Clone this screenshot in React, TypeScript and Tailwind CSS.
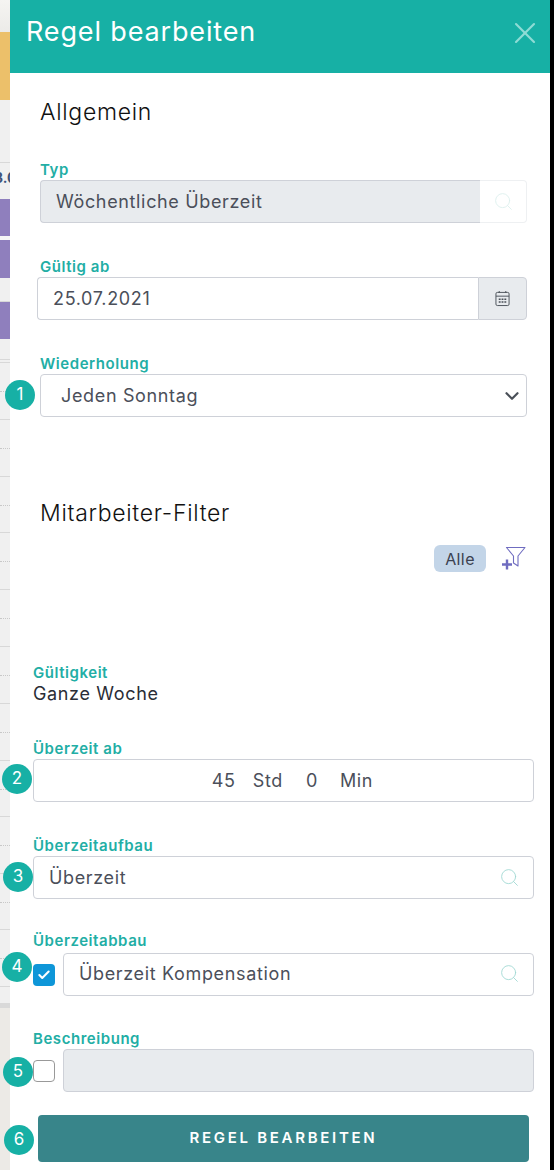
import React from "react";
import { Check, ChevronDown, Search, X } from "lucide-react";

const strip = [
  { cls: "h-[32px] bg-gradient-to-b from-[#f5f4f2] to-[#ecebe8]" },
  { cls: "h-[68px] bg-[#ecc06a]" },
  { cls: "h-[63px] bg-[#f0f0f0] border-b border-[#d8d8d8]" },
  { cls: "h-[36px] bg-[#f0f0f0]", text: "3.0" },
  { cls: "h-[37px] bg-[#8f7fbd]" },
  { cls: "h-[4px] bg-[#f6f6f6]" },
  { cls: "h-[38px] bg-[#8f7fbd]" },
  { cls: "h-[24px] bg-[#f0f0f0] border-b border-[#d8d8d8]" },
  { cls: "h-[37px] bg-[#8f7fbd]" },
  { cls: "h-[21px] bg-[#f0f0f0] border-b border-[#d8d8d8]" },
  { cls: "h-[3px] bg-[#f0f0f0] border-b border-[#d8d8d8]" },
];

const rows = [
  "h-[57px]",
  "h-[57px]",
  "h-[56px]",
  "h-[57px]",
  "h-[57px]",
  "h-[57px]",
  "h-[57px]",
  "h-[56px]",
  "h-[57px]",
  "h-[56px]",
  "h-[57px]",
];

const badges = [
  { n: 1, cls: "left-[5px] top-[380px]" },
  { n: 2, cls: "left-[2px] top-[764px]" },
  { n: 3, cls: "left-[3px] top-[862px]" },
  { n: 4, cls: "left-[2px] top-[952px]" },
  { n: 5, cls: "left-[3px] top-[1057px]" },
  { n: 6, cls: "left-[4px] top-[1125px]" },
];

function Label({ children, className = "" }: { children: React.ReactNode; className?: string }) {
  return (
    <div className={`h-[21px] text-[15px] leading-[21px] font-semibold tracking-[0.55px] text-[#22aea5] ${className}`}>
      {children}
    </div>
  );
}

function SearchIcon({ faint = false }: { faint?: boolean }) {
  return <Search strokeWidth={1} className={`h-[21px] w-[21px] ${faint ? "text-[#dcefed]" : "text-[#9fd8d2]"}`} />;
}

function CalendarIcon() {
  return (
    <svg viewBox="0 0 16 18" className="h-[17px] w-[15px] text-[#4a5058]" fill="none" stroke="currentColor">
      <rect x="1" y="2.5" width="14" height="14" rx="1.5" />
      <path d="M1 6.5h14M4.5 1v2M11.5 1v2" />
      <path
        d="M4 9h2v1.5H4zM7 9h2v1.5H7zM10 9h2v1.5h-2zM4 12h2v1.5H4zM7 12h2v1.5H7zM10 12h2v1.5h-2z"
        fill="currentColor"
        stroke="none"
      />
    </svg>
  );
}

function FilterPlusIcon() {
  return (
    <svg viewBox="0 0 25 25" className="h-[25px] w-[25px] text-[#6f6cc0]" fill="none" stroke="currentColor">
      <path d="M5.5 1.5h18.5l-7 8.5v10l-4.5-3v-7z" strokeWidth="1.1" strokeLinejoin="round" />
      <path d="M1 18.5h10M6 13.5v10" strokeWidth="2.4" />
    </svg>
  );
}

export default function App() {
  const textCls = "text-[18px] tracking-[0.65px] text-[#4b4f5a]";
  const boxCls = "h-[43px] rounded border border-[#ced1d8] bg-white";

  return (
    <div className="relative flex h-[1170px] w-[554px] overflow-hidden bg-white font-['Inter',sans-serif]">
      {/* page behind the drawer */}
      <div className="flex h-full w-[10px] shrink-0 flex-col overflow-hidden bg-[#f0f0f0]">
        {strip.map((s, i) => (
          <div key={i} className={`shrink-0 ${s.cls}`}>
            {s.text && (
              <div className="mt-[6px] -ml-[6px] whitespace-nowrap text-[14px] leading-[18px] font-bold text-[#3c5378]">
                {s.text}
              </div>
            )}
          </div>
        ))}
        {rows.map((h, i) => (
          <div key={i} className={`shrink-0 border-b border-[#d8d8d8] ${h}`}>
            <div className="mt-[28px] border-t border-dotted border-[#c8c8c8]" />
          </div>
        ))}
        <div className="h-[16px] shrink-0" />
        <div className="h-[5px] shrink-0 bg-[#d9d9d9]" />
        <div className="flex-1 bg-[#eceae6]" />
      </div>

      {/* drawer */}
      <div className="flex h-full w-[540px] shrink-0 flex-col bg-white">
        <div className="flex h-[73px] shrink-0 items-center justify-between bg-[#17b0a5] pr-[7px] pb-[9px] pl-[16px]">
          <h1 className="text-[27px] font-normal tracking-[0.85px] text-white">Regel bearbeiten</h1>
          <X strokeWidth={1.4} className="mt-[2px] h-[36px] w-[36px] text-[#8fdcd5]" />
        </div>

        <h2 className="mt-[24px] ml-[30px] h-[30px] text-[23px] leading-[30px] font-light tracking-[0.7px] text-[#111]">
          Allgemein
        </h2>

        <Label className="mt-[32px] ml-[30px]">Typ</Label>
        <div className="ml-[30px] flex h-[43px] w-[487px]">
          <div className={`flex flex-1 items-center rounded-l border border-r-0 border-[#ced1d8] bg-[#e8ebee] pl-[15px] ${textCls}`}>
            Wöchentliche Überzeit
          </div>
          <div className="flex w-[47px] items-center justify-center rounded-r border border-l-0 border-[#eef0f2]">
            <SearchIcon faint />
          </div>
        </div>

        <Label className="mt-[33px] ml-[30px]">Gültig ab</Label>
        <div className="ml-[27px] flex h-[43px] w-[490px]">
          <div className={`flex flex-1 items-center rounded-l-sm border border-r-0 border-[#ced1d8] pl-[15px] ${textCls}`}>
            25.07.2021
          </div>
          <div className="flex w-[49px] items-center justify-center rounded-r border border-[#ced1d8] bg-[#e8ebee]">
            <CalendarIcon />
          </div>
        </div>

        <Label className="mt-[33px] ml-[30px]">Wiederholung</Label>
        <div className={`ml-[30px] flex w-[487px] items-center justify-between pr-[3px] pl-[20px] ${boxCls} ${textCls}`}>
          Jeden Sonntag
          <ChevronDown strokeWidth={2.4} className="h-[22px] w-[22px] text-[#4a5058]" />
        </div>

        <h2 className="mt-[81px] ml-[30px] h-[30px] text-[23px] leading-[30px] font-light tracking-[0.7px] text-[#111]">
          Mitarbeiter-Filter
        </h2>

        <div className="mt-[17px] flex h-[27px] items-center justify-end gap-[15px] pr-[24px]">
          <span className="flex h-[27px] w-[52px] items-center justify-center rounded-md bg-[#c3d5e8] text-[16px] tracking-[0.4px] text-[#3b4150]">
            Alle
          </span>
          <FilterPlusIcon />
        </div>

        <Label className="mt-[90px] ml-[23px]">Gültigkeit</Label>
        <div className="ml-[23px] h-[21px] text-[18px] leading-[21px] tracking-[0.65px] text-[#2a2d36]">Ganze Woche</div>

        <Label className="mt-[34px] ml-[23px]">Überzeit ab</Label>
        <div className={`ml-[23px] flex w-[501px] items-center justify-center gap-[17px] pl-[18px] ${boxCls} ${textCls}`}>
          <span>45</span>
          <span>Std</span>
          <span className="ml-[6px]">0</span>
          <span className="ml-[5px]">Min</span>
        </div>

        <Label className="mt-[33px] ml-[23px]">Überzeitaufbau</Label>
        <div className={`ml-[23px] flex w-[501px] items-center justify-between pr-[13px] pl-[15px] ${boxCls} ${textCls}`}>
          Überzeit
          <SearchIcon />
        </div>

        <Label className="mt-[31px] mb-[2px] ml-[23px]">Überzeitabbau</Label>
        <div className="ml-[23px] flex w-[501px] items-center gap-[8px]">
          <div className="flex h-[22px] w-[22px] shrink-0 items-center justify-center rounded bg-[#0e96d8]">
            <Check strokeWidth={3.5} className="h-[14px] w-[14px] text-white" />
          </div>
          <div className={`flex flex-1 items-center justify-between pr-[13px] pb-[2px] pl-[15px] ${boxCls} ${textCls}`}>
            Überzeit Kompensation
            <SearchIcon />
          </div>
        </div>

        <Label className="mt-[32px] ml-[23px]">Beschreibung</Label>
        <div className="ml-[23px] flex w-[501px] items-center gap-[8px]">
          <div className="h-[22px] w-[22px] shrink-0 rounded border border-[#999]" />
          <div className="h-[43px] flex-1 rounded border border-[#ced1d8] bg-[#e8ebee]" />
        </div>

        <button className="mt-[23px] ml-[28px] flex h-[47px] w-[491px] items-center justify-center rounded bg-[#38858a] text-[15px] font-semibold tracking-[2.7px] text-white">
          REGEL BEARBEITEN
        </button>
      </div>

      <div className="h-full w-[4px] shrink-0 bg-black" />

      {/* numbered markers sit across the drawer edge */}
      {badges.map((b) => (
        <div
          key={b.n}
          className={`absolute flex h-[30px] w-[30px] items-center justify-center rounded-full bg-[#17b0a5] text-[17px] text-white ${b.cls}`}
        >
          {b.n}
        </div>
      ))}
    </div>
  );
}
